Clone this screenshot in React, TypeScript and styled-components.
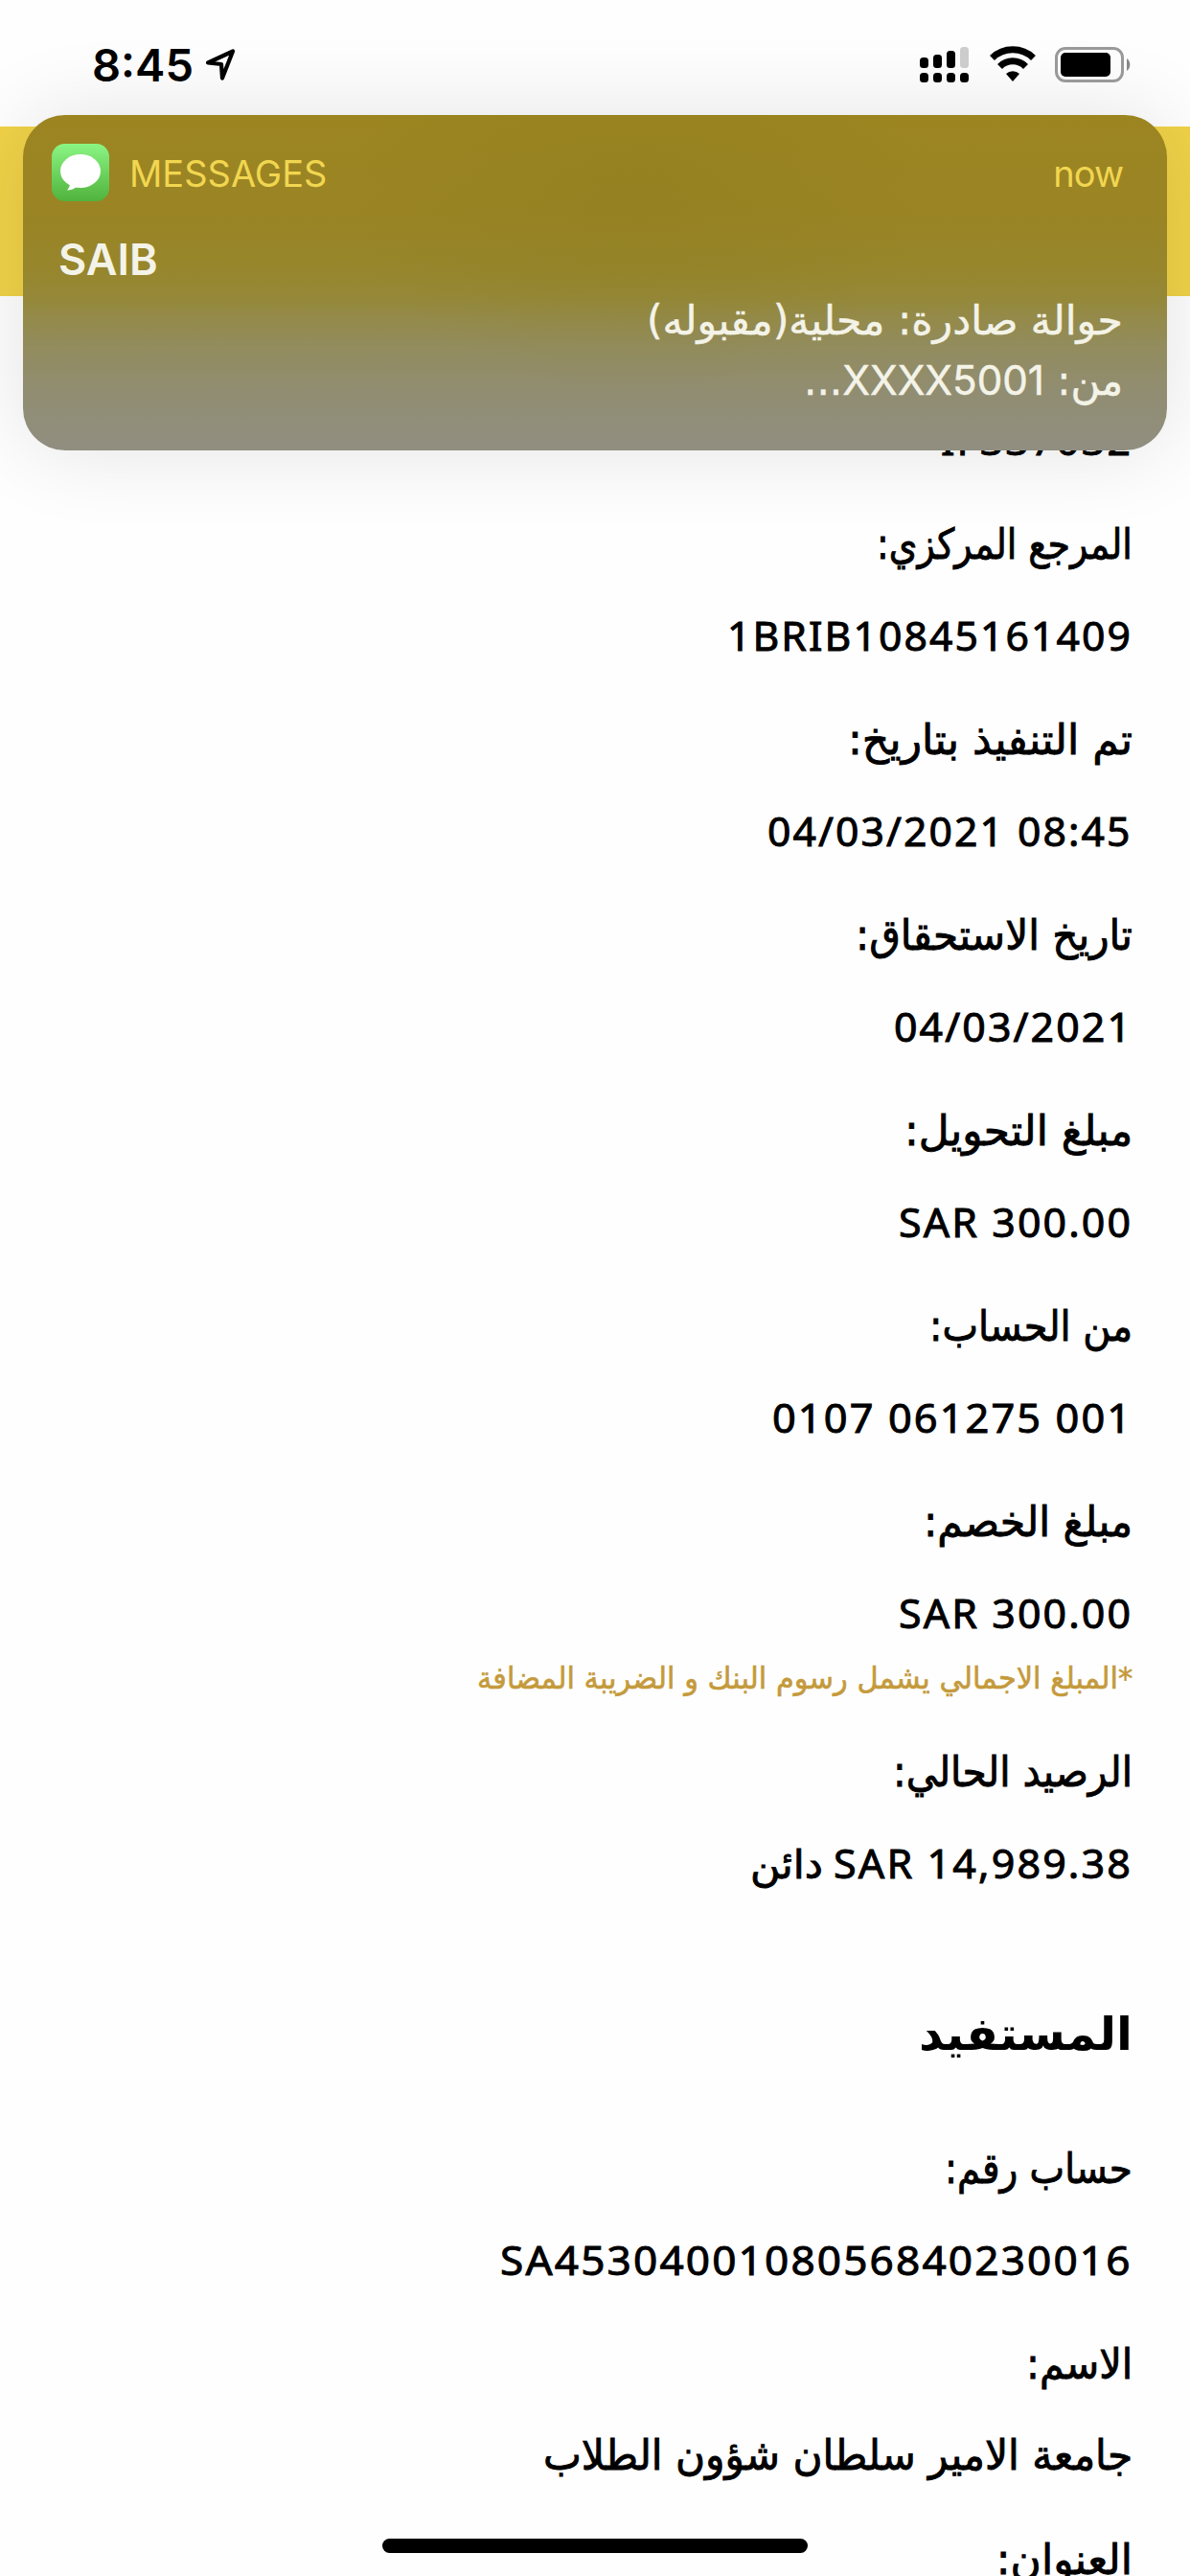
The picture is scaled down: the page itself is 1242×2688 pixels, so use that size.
import React, { useLayoutEffect, useRef } from 'react';
import styled, { createGlobalStyle } from 'styled-components';

const Global = createGlobalStyle`
  html, body { margin: 0; background: #fff; }
  * { box-sizing: border-box; }
`;

const system = `'Inter', 'DejaVu Sans', sans-serif`;
const arabicFace = `'DejaVu Sans', sans-serif`;
const latinFace = `'Noto Sans', 'DejaVu Sans', sans-serif`;

const Screen = styled.main`
  position: relative;
  width: 1242px;
  height: 2688px;
  overflow: hidden;
  background: #fefefe;
  font-family: ${system};
  color: #000;
`;

const StatusBar = styled.header`
  position: relative;
  z-index: 3;
  display: flex;
  justify-content: space-between;
  align-items: flex-start;
  height: 132px;
  padding: 0 61px 0 96px;
`;

const Clock = styled.div`
  display: flex;
  gap: 12px;
  padding-top: 39px;
  font: 600 47px/58px ${system};
`;

const Arrow = styled.svg`
  margin-top: 11px;
`;

const Indicators = styled.div`
  display: flex;
  gap: 21px;
  padding-top: 48px;
`;

const Battery = styled.svg`
  margin-left: -1px;
`;

const Band = styled.div`
  height: 177px;
  margin-bottom: 120px;
  background: #f0d248;
`;

const Banner = styled.section`
  position: absolute;
  z-index: 2;
  top: 120px;
  left: 24px;
  width: 1194px;
  height: 350px;
  border-radius: 44px;
  padding: 30px 46px 0 30px;
  background:
    radial-gradient(ellipse 300px 210px at 640px 80px, rgba(130, 118, 24, 0.22), transparent),
    linear-gradient(#9c8521 0, #9a8424 100px, #97862c 160px, #958838 190px, #948a4a 212px, #928c5e 242px, #918d72 290px, #908e80 350px);
  box-shadow: 0 0 90px rgba(0, 0, 0, 0.11);
  color: #f4f3e8;
`;

const BannerTop = styled.div`
  display: flex;
  align-items: flex-start;
  height: 62px;
  font: 400 38px/62px ${system};
  color: #f1d650;
`;

const AppName = styled.span`
  margin-left: 21px;
`;

const When = styled.span`
  margin-left: auto;
  letter-spacing: -1px;
`;

const Sender = styled.div`
  margin: 30px 0 0 7px;
  height: 61px;
  font: 600 45px/58px ${system};
`;

const Details = styled.div`
  direction: rtl;
  padding-right: 60px;
`;

type LineProps = { $h: number; $size: number; $weight?: number; $color?: string; $latin?: boolean; $after?: number; $stroke?: number };

const Line = styled.div<LineProps>`
  display: flex;
  direction: rtl;
  height: ${p => p.$h}px;
  margin-bottom: ${p => p.$after ?? 0}px;
  font-family: ${p => (p.$latin ? latinFace : arabicFace)};
  font-size: ${p => p.$size}px;
  font-weight: ${p => p.$weight ?? 400};
  line-height: ${p => p.$h}px;
  color: ${p => p.$color ?? 'inherit'};
  -webkit-text-stroke: ${p => p.$stroke ?? 0}px currentColor;
  white-space: nowrap;
`;

const Run = styled.span`
  flex: none;
  transform-origin: 100% 50%;
`;

const Latin = styled.bdi`
  font-family: ${latinFace};
  letter-spacing: 2px;
`;

const Masked = styled.bdi`
  font-family: ${system};
`;

/* Condenses or widens a run so that it takes exactly the given width. */
function Fit({ width, children }: { width: number; children: React.ReactNode }) {
  const ref = useRef<HTMLSpanElement>(null);
  useLayoutEffect(() => {
    const el = ref.current;
    if (el) el.style.transform = `scaleX(${width / el.offsetWidth})`;
  }, [width]);
  return <Run ref={ref}>{children}</Run>;
}

const FieldBox = styled.div<{ $gap: number }>`
  display: flex;
  flex-direction: column;
  gap: 35px;
  margin-bottom: ${p => p.$gap}px;
`;

type FieldProps = { label: string; lw: number; value?: string; suffix?: string; vw?: number; gap?: number; arabic?: boolean };

function Field({ label, lw, value, suffix, vw = 0, gap = 49, arabic }: FieldProps) {
  return (
    <FieldBox $gap={gap}>
      <Line $h={60} $size={44} $stroke={0.9}>
        <Fit width={lw}>{label}</Fit>
      </Line>
      {value && (
        <Line $h={60} $size={arabic ? 44 : 41} $latin={!arabic} $stroke={0.9}>
          <Fit width={vw}>
            {arabic ? value : <Latin>{value}</Latin>}
            {suffix}
          </Fit>
        </Line>
      )}
    </FieldBox>
  );
}

const Home = styled.div`
  position: absolute;
  left: 399px;
  top: 2649px;
  width: 444px;
  height: 15px;
  border-radius: 8px;
  background: #000;
`;

export default function App() {
  return (
    <Screen>
      <Global />
      <StatusBar>
        <Clock>
          8:45
          <Arrow width="33" height="36" viewBox="0 0 33 36">
            <path d="M3 15.500 29 3.500 18 31.500 17 17Z" fill="none" stroke="#000" strokeWidth="4.200" strokeLinejoin="round" />
          </Arrow>
        </Clock>
        <Indicators>
          <svg width="52" height="40" viewBox="0 0 52 40">
            <rect x="0" y="12" width="9" height="11" rx="3.5" />
            <rect x="14" y="9" width="9" height="14" rx="3.5" />
            <rect x="28" y="5" width="9" height="18" rx="3.5" />
            <rect x="42" y="1" width="9" height="22" rx="3.5" fill="#ccc" />
            {[0, 14, 28, 42].map(x => <rect key={x} x={x} y="28" width="9" height="10" rx="3.5" />)}
          </svg>
          <svg width="48" height="38" viewBox="0 0 48 38">
            <path d="M2.500 12.500a31 31 0 0 1 43 0M10.500 21.500a19 19 0 0 1 27 0" fill="none" stroke="#000" strokeWidth="7" />
            <path d="M24 37 17 29a10 10 0 0 1 14 0Z" />
          </svg>
          <Battery width="80" height="40" viewBox="0 0 80 40">
            <rect x="1.500" y="2.500" width="69" height="34" rx="9.500" fill="none" stroke="#999" strokeWidth="3" />
            <rect x="6" y="7" width="52" height="25" rx="5" />
            <path d="M75 13a8 8 0 0 1 0 13Z" fill="#888" />
          </Battery>
        </Indicators>
      </StatusBar>
      <Band />
      <Banner>
        <BannerTop>
          <svg width="60" height="60" viewBox="0 0 60 60">
            <defs>
              <linearGradient id="msg" x2="0" y2="1"><stop stopColor="#8bf584" /><stop offset="1" stopColor="#50b33c" /></linearGradient>
            </defs>
            <rect width="60" height="60" rx="13.500" fill="url(#msg)" />
            <ellipse cx="30" cy="28.500" rx="21" ry="17.500" fill="#fff" />
            <path d="M19 41c0 3-1 5-3 7.500 4 0 8-1.500 10-4Z" fill="#fff" />
          </svg>
          <AppName>MESSAGES</AppName>
          <When>now</When>
        </BannerTop>
        <Sender>SAIB</Sender>
        <Line $h={63} $size={42} $stroke={0.5}><Fit width={497}>حوالة صادرة: محلية(مقبوله)</Fit></Line>
        <Line $h={60} $size={43} $stroke={0.5}><Fit width={333}>من: <Masked>XXXX5001</Masked>...</Fit></Line>
      </Banner>
      <Details>
        <Line $h={60} $size={41} $after={49} $latin $stroke={0.9}><Fit width={200}><Latin>IF337032</Latin></Fit></Line>
        <Field label="المرجع المركزي:" lw={267} value="1BRIB10845161409" vw={423} />
        <Field label="تم التنفيذ بتاريخ:" lw={297} value="04/03/2021 08:45" vw={381} />
        <Field label="تاريخ الاستحقاق:" lw={289} value="04/03/2021" vw={249} />
        <Field label="مبلغ التحويل:" lw={238} value="SAR 300.00" vw={244} />
        <Field label="من الحساب:" lw={212} value="0107 061275 001" vw={376} />
        <Field label="مبلغ الخصم:" lw={218} value="SAR 300.00" vw={244} gap={14} />
        <Line $h={48} $size={32} $after={44} $color="#c49a3c" $stroke={0.6}><Fit width={684}>*المبلغ الاجمالي يشمل رسوم البنك و الضريبة المضافة</Fit></Line>
        <Field label="الرصيد الحالي:" lw={250} value="SAR 14,989.38" suffix=" دائن" vw={399} gap={113} />
        <Line $h={70} $size={48} $weight={700} $after={76}><Fit width={223}>المستفيد</Fit></Line>
        <Field label="حساب رقم:" lw={196} value="SA4530400108056840230016" vw={660} />
        <Field label="الاسم:" lw={111} value="جامعة الامير سلطان شؤون الطلاب" vw={615} arabic />
        <Field label="العنوان:" lw={142} />
      </Details>
      <Home />
    </Screen>
  );
}
